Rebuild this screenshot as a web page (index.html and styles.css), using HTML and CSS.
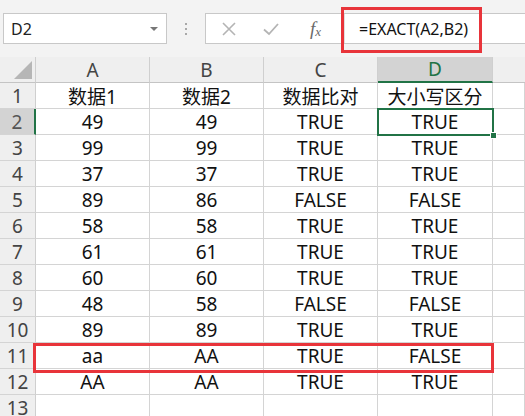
FILE: index.html
```html
<!DOCTYPE html>
<html lang="zh">
<head>
<meta charset="utf-8">
<link rel="stylesheet" href="styles.css">
</head>
<body>
<div class="app">
  <div class="toolbar">
    <div class="namebox">
      <span class="name">D2</span>
      <span class="caret"></span>
    </div>
    <div class="grip"><i></i><i></i><i></i></div>
    <div class="fbar">
      <svg class="ico ico-x" width="16" height="16" viewBox="0 0 16 16"><path d="M2 2L14 14M14 2L2 14" stroke="#b4b4b4" stroke-width="1.6" fill="none"/></svg>
      <svg class="ico ico-ok" width="18" height="16" viewBox="0 0 18 16"><path d="M2 8.5L7 13L16 3" stroke="#b4b4b4" stroke-width="1.8" fill="none"/></svg>
      <span class="fx">f<sub>x</sub></span>
      <div class="formula">=EXACT(A2,B2)</div>
      <div class="redbox fbox"></div>
    </div>
  </div>
  <div class="sheet">
    <div class="grid">
      <div class="corner"><span class="tri"></span></div>
      <div class="ch">A</div><div class="ch">B</div><div class="ch">C</div><div class="ch ch-sel">D</div><div class="ch ch-last"></div>

      <div class="rh">1</div><div class="c">数据1</div><div class="c">数据2</div><div class="c">数据比对</div><div class="c">大小写区分</div><div class="c"></div>
      <div class="rh rh-sel">2</div><div class="c">49</div><div class="c">49</div><div class="c">TRUE</div><div class="c">TRUE</div><div class="c"></div>
      <div class="rh">3</div><div class="c">99</div><div class="c">99</div><div class="c">TRUE</div><div class="c">TRUE</div><div class="c"></div>
      <div class="rh">4</div><div class="c">37</div><div class="c">37</div><div class="c">TRUE</div><div class="c">TRUE</div><div class="c"></div>
      <div class="rh">5</div><div class="c">89</div><div class="c">86</div><div class="c">FALSE</div><div class="c">FALSE</div><div class="c"></div>
      <div class="rh">6</div><div class="c">58</div><div class="c">58</div><div class="c">TRUE</div><div class="c">TRUE</div><div class="c"></div>
      <div class="rh">7</div><div class="c">61</div><div class="c">61</div><div class="c">TRUE</div><div class="c">TRUE</div><div class="c"></div>
      <div class="rh">8</div><div class="c">60</div><div class="c">60</div><div class="c">TRUE</div><div class="c">TRUE</div><div class="c"></div>
      <div class="rh">9</div><div class="c">48</div><div class="c">58</div><div class="c">FALSE</div><div class="c">FALSE</div><div class="c"></div>
      <div class="rh">10</div><div class="c">89</div><div class="c">89</div><div class="c">TRUE</div><div class="c">TRUE</div><div class="c"></div>
      <div class="rh">11</div><div class="c">aa</div><div class="c">AA</div><div class="c">TRUE</div><div class="c">FALSE</div><div class="c"></div>
      <div class="rh">12</div><div class="c">AA</div><div class="c">AA</div><div class="c">TRUE</div><div class="c">TRUE</div><div class="c"></div>
      <div class="rh">13</div><div class="c"></div><div class="c"></div><div class="c"></div><div class="c"></div><div class="c"></div>
    </div>
    <div class="selection"><span class="handle"></span></div>
    <div class="redbox rowbox"></div>
  </div>
</div>
</body>
</html>
```

FILE: styles.css
```css
* { box-sizing: border-box; }
html, body { margin: 0; padding: 0; }
body {
  width: 525px;
  height: 416px;
  overflow: hidden;
  background: #ffffff;
  font-family: "Noto Sans", "Noto Sans CJK SC", sans-serif;
  color: #1a1a1a;
}
.app { display: flex; flex-direction: column; width: 525px; }

.toolbar {
  height: 57px;
  background: #f3f3f3;
  display: flex;
  align-items: flex-start;
  padding: 13px 0 0 3px;
}
.namebox {
  width: 164px;
  height: 31px;
  background: #fff;
  border: 1px solid #c8c8c8;
  display: flex;
  align-items: center;
  justify-content: space-between;
  padding: 0 8px 0 7px;
}
.name { font-size: 16px; color: #222; }
.caret {
  width: 0; height: 0;
  border-left: 4px solid transparent;
  border-right: 4px solid transparent;
  border-top: 4px solid #777;
}
.grip {
  width: 38px;
  height: 31px;
  display: flex;
  flex-direction: column;
  align-items: center;
  justify-content: center;
  gap: 3px;
}
.grip i { display: block; width: 2px; height: 2px; background: #a8a8a8; }
.fbar {
  position: relative;
  flex: 1;
  height: 31px;
  background: #fff;
  border: 1px solid #c8c8c8;
  border-right: none;
  display: flex;
  align-items: center;
}
.ico-x { margin-left: 15px; }
.ico-ok { margin-left: 25px; }
.fx {
  margin-left: 30px;
  font-family: "Liberation Serif", serif;
  font-style: italic;
  font-size: 19px;
  color: #6a6a6a;
  width: 30px;
}
.fx sub { font-size: 13px; vertical-align: -1px; }
.formula {
  margin-left: 4px;
  height: 100%;
  border-left: 1px solid #e0e0e0;
  padding-left: 14px;
  display: flex;
  align-items: center;
  font-size: 16px;
  color: #111;
}
.redbox {
  position: absolute;
  border: 3px solid #e8343a;
}
.fbox { left: 135px; top: -7px; width: 141px; height: 46px; }

.sheet { position: relative; }
.grid {
  display: grid;
  grid-template-columns: 36px 114px 114px 114px 115px 1fr;
  grid-template-rows: repeat(14, 26px);
}
.corner, .ch, .rh {
  background: #efefef;
  color: #444;
  border-right: 1px solid #cfcfcf;
  border-bottom: 1px solid #c4c4c4;
  display: flex;
  align-items: center;
  justify-content: center;
  font-size: 19px;
}
.corner { position: relative; }
.tri {
  position: absolute;
  right: 3px; bottom: 3px;
  width: 0; height: 0;
  border-left: 18px solid transparent;
  border-bottom: 18px solid #b6b6b6;
}
.ch-sel {
  background: #d3d3d3;
  color: #217346;
  border-bottom: 2px solid #217346;
}
.ch-last { border-right: none; }
.rh { border-bottom: 1px solid #d4d4d4; }
.rh-sel {
  background: #d3d3d3;
  color: #555;
  border-right: 2px solid #217346;
}
.c {
  border-right: 1px solid #d4d4d4;
  border-bottom: 1px solid #d4d4d4;
  display: flex;
  align-items: center;
  justify-content: center;
  font-size: 19px;
  color: #111;
  white-space: nowrap;
  padding-top: 1px;
}

.selection {
  position: absolute;
  left: 377px;
  top: 51px;
  width: 117px;
  height: 28px;
  border: 2px solid #217346;
}
.handle {
  position: absolute;
  right: -5px; bottom: -5px;
  width: 7px; height: 7px;
  background: #217346;
  border: 1px solid #fff;
}
.rowbox { left: 33px; top: 286px; width: 461px; height: 30px; }
```
